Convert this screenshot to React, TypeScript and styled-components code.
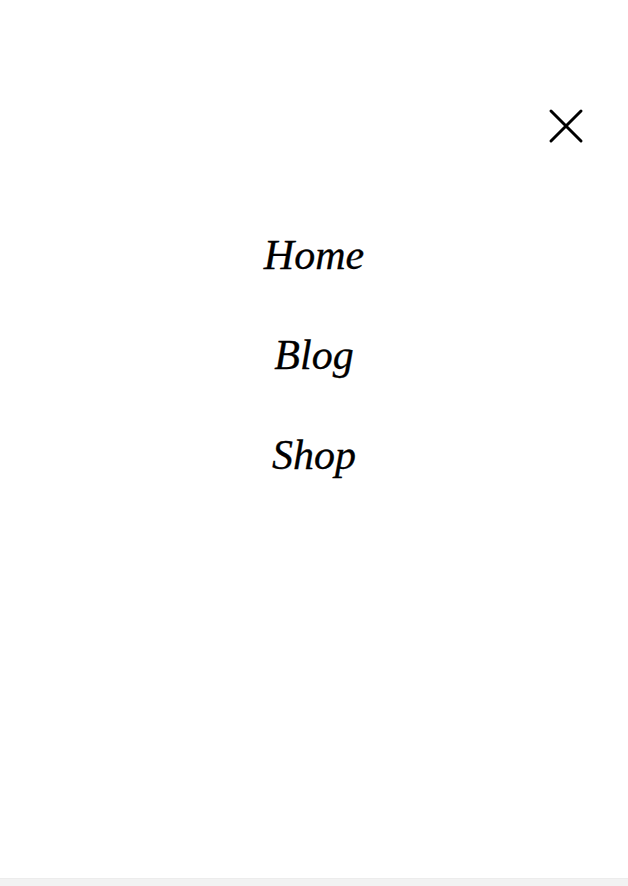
import React from "react";
import styled, { createGlobalStyle } from "styled-components";

const Global = createGlobalStyle`
  html, body { margin: 0; padding: 0; background: #fff; }
  body { font-family: "Liberation Serif", serif; }
`;

const Page = styled.div`
  height: 886px;
  display: flex;
  flex-direction: column;
  background: #fff;
`;

const Overlay = styled.div`
  flex: 1;
  display: flex;
  flex-direction: column;
`;

const TopBar = styled.div`
  display: flex;
  justify-content: flex-end;
  padding: 108px 44px 0 0;
`;

const CloseButton = styled.button`
  width: 36px;
  height: 36px;
  padding: 0;
  border: 0;
  background: transparent;
  display: flex;
  align-items: center;
  justify-content: center;
  cursor: pointer;
`;

const Nav = styled.nav`
  display: flex;
  flex-direction: column;
  align-items: center;
  gap: 50px;
  margin-top: 86px;
`;

const NavLink = styled.a`
  font-family: "Liberation Serif", "Times New Roman", serif;
  font-style: italic;
  font-size: 42px;
  line-height: 50px;
  color: #000;
  text-decoration: none;
  -webkit-text-stroke: 0.3px #000;
`;

const BottomStrip = styled.div`
  height: 8px;
  background: #f2f2f2;
  border-top: 1px solid #ececec;
  box-sizing: border-box;
`;

export default function App() {
  return (
    <>
      <Global />
      <Page>
        <Overlay>
          <TopBar>
            <CloseButton aria-label="Close menu">
              <svg width="36" height="36" viewBox="0 0 36 36">
                <path d="M3 3 L33 33 M33 3 L3 33" stroke="#000" strokeWidth="3" strokeLinecap="round" fill="none" />
              </svg>
            </CloseButton>
          </TopBar>
          <Nav>
            <NavLink href="#">Home</NavLink>
            <NavLink href="#">Blog</NavLink>
            <NavLink href="#">Shop</NavLink>
          </Nav>
        </Overlay>
        <BottomStrip />
      </Page>
    </>
  );
}
